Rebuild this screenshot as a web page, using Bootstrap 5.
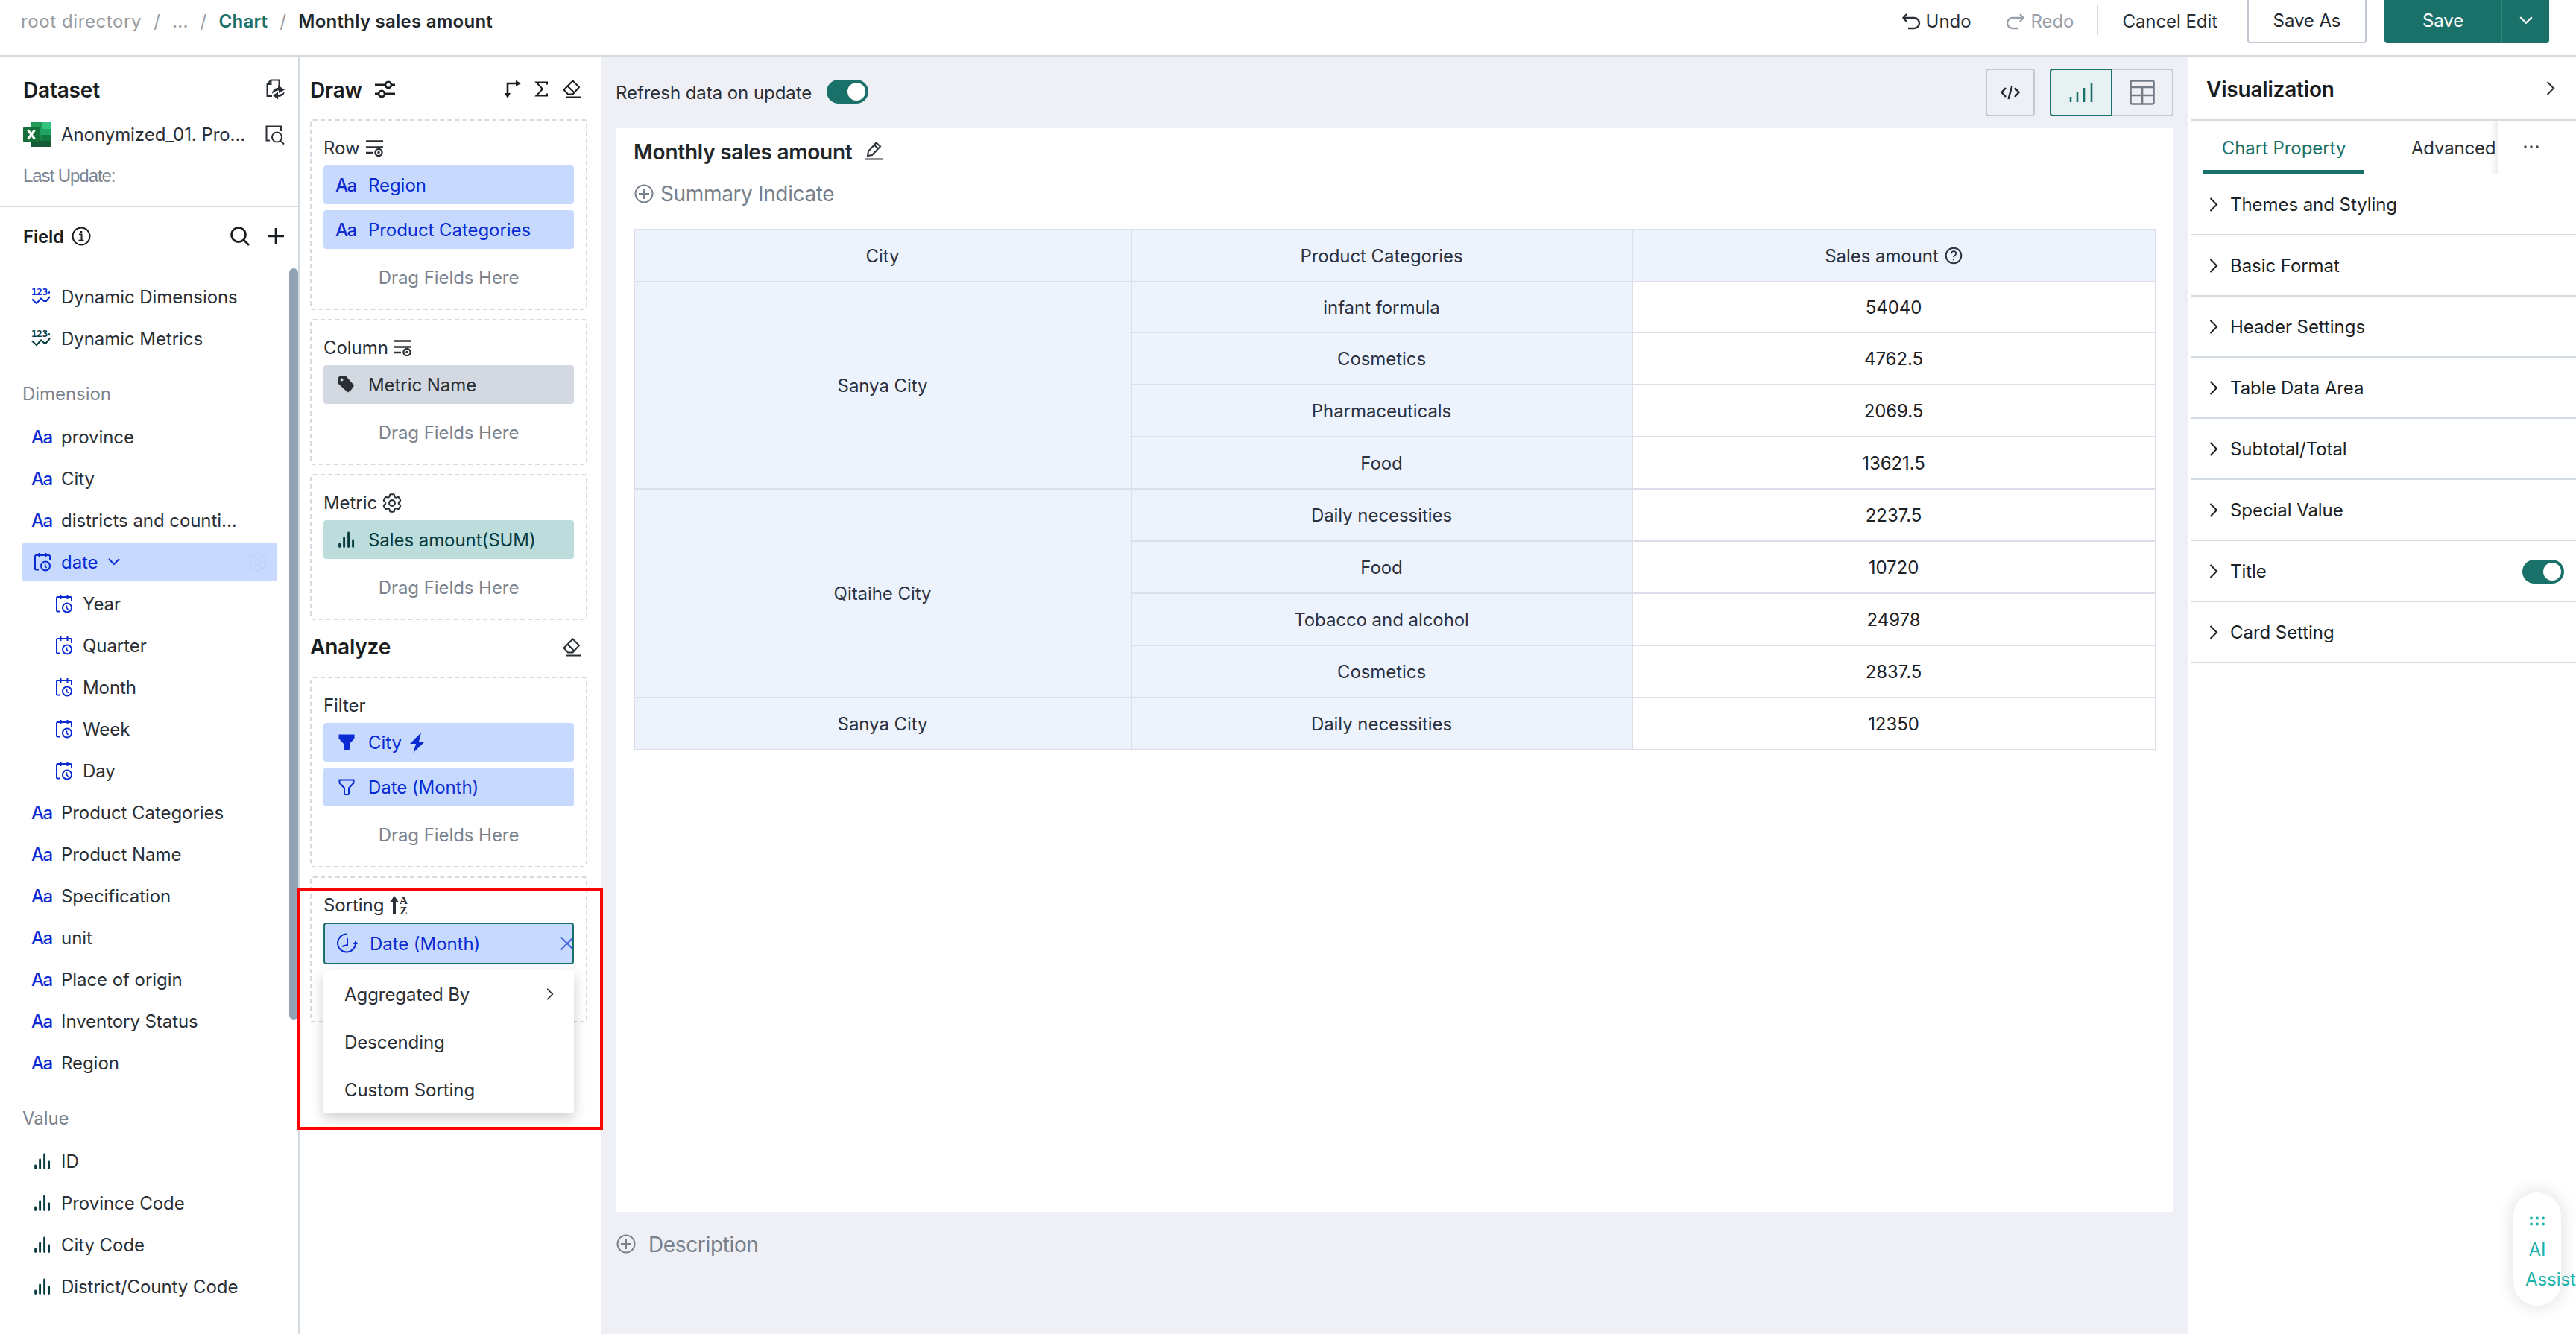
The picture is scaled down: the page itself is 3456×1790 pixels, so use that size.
<!DOCTYPE html>
<html lang="en">
<head>
<meta charset="utf-8">
<title>Monthly sales amount</title>
<link href="https://cdn.jsdelivr.net/npm/bootstrap@5.3.0/dist/css/bootstrap.min.css" rel="stylesheet">
<style>
:root{--green:#1a7169;--line:#d4dae1;--blue:#0a2bd3;--ink:#2a2f35;--muted:#7b838f;--canvas:#eff0f6}
body{width:3456px;height:1790px;overflow:hidden;background:#fff;font-family:Inter,"Liberation Sans",sans-serif;font-size:24px;line-height:36px;letter-spacing:-.06px;color:var(--ink)}
svg{flex:none;display:block;fill:none;stroke:currentColor;stroke-width:2;overflow:visible}
.topbar{height:76px;border-bottom:2px solid var(--line);padding:0 36px 0 28px}
.crumbs{height:58px;gap:16px;color:#999c9f;letter-spacing:.25px}
.tools{height:58px}
.btn-head{height:64px;border-radius:4px;font-size:24px;margin-top:-6px;letter-spacing:-.1px;padding-top:9px}
.btn-saveas{width:160px;border:2px solid #c0c7d2;color:#22272b;margin-left:40px}
.btn-save{background:var(--green);color:#fff;border:0;padding-left:0;padding-right:0}
.heading{font-size:28px;font-weight:600;letter-spacing:-.2px;color:#191d20;line-height:40px}
.work{height:1714px}
.fields{width:402px;border-right:2px solid var(--line)}
.dataset{height:202px;border-bottom:2px solid var(--line);padding:0 18px 0 31px}
.updated{font-family:"Liberation Sans",sans-serif;letter-spacing:-1.05px;color:var(--muted);margin-top:19px}
.field-list{padding:34px 28px 0 30px}
.fld{height:52px;margin-bottom:4px;padding:2px 0 0 12px;border-radius:4px;white-space:nowrap}
.fld svg,.pill svg,.prop svg{margin-bottom:2px}
.fld .ico{width:40px;color:var(--blue)}
.fld.sub{padding-left:41px}
.ico-val,.fld .ico.ico-val{color:#073b3f}
.fld .aa,.pill .aa{font-weight:500;letter-spacing:-1.6px;color:var(--blue)}
.group-label{height:76px;padding-top:25px;color:var(--muted);line-height:40px}
.fld.active{background:#c7dafe;color:var(--blue)}
.scroll-thumb{position:absolute;left:388px;top:284px;width:12px;height:1008px;border-radius:6px;background:#92a3b6}
.shelves{width:404px;padding:0 18px 0 14px}
.shelf{border:2px dashed var(--line);border-radius:4px;padding:0 16px;height:196px;margin-bottom:12px}
.shelf.tall{height:256px}
.shelf-label{height:60px;padding-top:14px}
.pill{height:52px;border-radius:4px;background:#c7dafe;color:var(--blue);margin-bottom:8px;padding:2px 0 0 16px}
.pill .ico{width:44px}
.pill-grey{background:#d4d8e0;color:var(--ink)}
.pill-teal{background:#bddddd;color:#073b3f}
.pill-open{height:56px;border:2px solid var(--green);overflow:hidden}
.drop-hint{color:var(--muted);text-align:center;margin-top:21px}
.sort-menu{display:block;position:absolute;left:16px;top:124px;width:336px;height:192px;padding:0;border:0;border-radius:2px;font-size:24px;box-shadow:0 6px 18px rgba(0,0,0,.2);z-index:2}
.sort-menu .dropdown-item{height:64px;padding:2px 27px 0 28px;color:var(--ink)}
.marker{position:absolute;left:399px;top:1192px;width:410px;height:324px;border:4px solid #fe0000;z-index:3}
.main{background:var(--canvas);width:2130px;padding:0 20px}
.mainbar{height:96px}
.form-switch .form-check-input{width:56px;height:32px;margin:0;border:0;background-color:var(--green)}
.form-switch{padding:0;min-height:0;line-height:0}
.tool-btn{height:64px;border:2px solid #c2c9d0;border-radius:4px;background:transparent;color:#22272b}
.tool-btn.on{border-color:var(--green);background:#e8f1f2;color:var(--green);border-radius:4px 0 0 4px}
.sheet{background:#fff;height:1454px;padding:14px 24px 0}
.sheet-title{font-weight:600;font-size:28px;letter-spacing:-.25px;line-height:36px;color:#22272b}
.hint{font-size:28px;letter-spacing:-.36px;color:#77808b}
.pivot{width:2043px;table-layout:fixed;border-collapse:collapse;text-align:center;color:#1d2125;margin-top:30px}
.pivot th,.pivot td{border:2px solid #dcdfe9;height:70px;padding:2px 1px 0 0;font-weight:400;vertical-align:middle}
.pivot th{background:#ecf3fd;color:#2b3140}
.pivot .first>*{height:68px}
.props{width:520px;padding-left:4px}
.props-head{height:86px;border-bottom:2px solid var(--line);padding:3px 28px 0 20px}
.props-tabs{height:72px}
.tab-on{width:216px;margin-left:16px;height:72px;color:var(--green);border-bottom:6px solid var(--green);padding-top:19px;text-align:center}
.tab-cut{width:180px;padding:19px 0 0 63px;overflow:hidden;letter-spacing:-.2px;background:linear-gradient(90deg,transparent 168px,rgba(0,0,0,.07) 180px)}
.prop{height:82px;border-bottom:2px solid var(--line);padding:2px 16px 0 24px;color:#1b1f23}
.prop svg{margin-right:16px}
.assistant{position:absolute;left:3372px;top:1600px;width:64px;height:152px;border-radius:32px;background:#fff;box-shadow:0 0 24px rgba(0,0,0,.14);color:#1bb3ab;line-height:40px;padding-top:32px}
.assistant svg{margin:0 auto 12px}
.assistant span{display:block;text-align:center}
.assistant .over{padding-left:16px;text-align:left;white-space:nowrap}
</style>
</head>
<body class="position-relative">
<svg class="d-none">
  <symbol id="date" viewBox="0 0 22 26"><path d="M6 23.500H2.500Q1 23.500 1 22V5.500Q1 4 2.500 4H19.500Q21 4 21 5.500V10M6.500 1v6M15.500 1v6"/><circle cx="15" cy="18.500" r="6"/><path d="M14.600 15.500V19l2 1.800" stroke-width="1.600"/></symbol>
  <symbol id="bars" viewBox="0 0 22 22"><path d="M1.600 17v3.500M7.600 9v11.500M13.600 2v18.500M19.600 12v8.500" stroke-width="2.900" stroke-linecap="round"/></symbol>
  <symbol id="num" viewBox="0 0 26 24"><text x="0" y="10" font-family="DejaVu Sans Mono" font-weight="700" font-size="12.500" letter-spacing="-.2" fill="currentColor" stroke="none">123</text><path d="M23 6.500h2" stroke-width="2.400"/><path d="M1 15.500l6 5.500 6-6.500 4 3.500h3l5-6"/></symbol>
  <symbol id="rows" viewBox="0 0 24 22"><path d="M0 1.500h23M0 9.500h23M0 17h9" stroke-width="2.400"/><circle cx="17" cy="16.500" r="4.600" stroke-width="2.300"/><circle cx="17" cy="16.500" r=".8"/></symbol>
  <symbol id="gear" viewBox="2 2 20 20"><path stroke-width="1.600" d="M9.594 3.940c.09-.542.56-.94 1.110-.94h2.593c.55 0 1.020.398 1.110.94l.213 1.281c.063.374.313.686.645.87.074.04.147.083.22.127.325.196.72.257 1.075.124l1.217-.456a1.125 1.125 0 0 1 1.370.49l1.296 2.247a1.125 1.125 0 0 1-.26 1.431l-1.003.827c-.293.241-.438.613-.43.992a7.723 7.723 0 0 1 0 .255c-.008.378.137.75.43.991l1.004.827c.424.35.534.955.26 1.430l-1.298 2.247a1.125 1.125 0 0 1-1.369.491l-1.217-.456c-.355-.133-.75-.072-1.076.124a6.470 6.470 0 0 1-.22.128c-.331.183-.581.495-.644.869l-.213 1.281c-.09.543-.56.94-1.110.94h-2.594c-.55 0-1.019-.398-1.110-.94l-.213-1.281c-.062-.374-.312-.686-.644-.87a6.520 6.520 0 0 1-.22-.127c-.325-.196-.72-.257-1.076-.124l-1.217.456a1.125 1.125 0 0 1-1.369-.49l-1.297-2.247a1.125 1.125 0 0 1 .26-1.431l1.004-.827c.292-.24.437-.613.43-.991a6.932 6.932 0 0 1 0-.255c.007-.38-.138-.751-.43-.992l-1.004-.827a1.125 1.125 0 0 1-.26-1.430l1.297-2.247a1.125 1.125 0 0 1 1.370-.491l1.216.456c.356.133.751.072 1.076-.124.072-.044.146-.086.22-.128.332-.183.582-.495.644-.869l.214-1.280Z"/><circle cx="12" cy="12" r="3" stroke-width="1.600"/></symbol>
  <symbol id="eraser" viewBox="0 0 25 25"><path d="M13.500 1.500l8.500 8.500-8.500 9.500H7L1.500 13.500zM6.500 8.500l9 9M5 23.500h20"/></symbol>
  <symbol id="right" viewBox="0 0 12 19"><path d="M1.500 1l8.500 8.500-8.500 8.500"/></symbol>
  <symbol id="down" viewBox="0 0 16 10"><path d="M1 1l7 7 7-7"/></symbol>
  <symbol id="plusc" viewBox="0 0 26 26"><circle cx="13" cy="13" r="11.500"/><path d="M6 13h14M13 6v14"/></symbol>
</svg>

<header class="topbar d-flex justify-content-between align-items-start">
  <nav class="crumbs d-flex align-items-center">
    <span style="letter-spacing:.6px">root directory</span><span>/</span><span>...</span><span>/</span>
    <span class="fw-semibold" style="color:var(--green)">Chart</span><span>/</span>
    <span class="fw-semibold" style="color:#22272b">Monthly sales amount</span>
  </nav>
  <div class="tools d-flex align-items-center">
    <svg width="24" height="22" viewBox="0 0 24 22"><path d="M6 1L1.500 6 6 11M2 6h14a6.500 6.500 0 0 1 0 14H8" stroke-width="2.400"/></svg>
    <span class="ms-2" style="margin-right:48px">Undo</span>
    <span class="d-flex align-items-center" style="color:#989fa8"><svg width="24" height="22" viewBox="0 0 24 22"><path d="M18 1l4.500 5-4.500 5M22 6H8a6.500 6.500 0 0 0 0 14h8" stroke-width="2.400"/></svg>
    <span class="ms-2">Redo</span></span>
    <span style="width:2px;height:40px;background:var(--line);margin:0 32px 4px 31px"></span>
    <span>Cancel Edit</span>
    <button class="btn btn-head btn-saveas">Save As</button>
    <div class="btn-group ms-4">
      <button class="btn btn-head btn-save" style="width:157px">Save</button>
      <button class="btn btn-head btn-save d-flex align-items-center justify-content-center" style="width:65px;border-left:2px solid #30887f"><svg width="18" height="11"><use href="#down"/></svg></button>
    </div>
  </div>
</header>

<div class="work d-flex position-relative">
  <aside class="fields flex-shrink-0">
    <section class="dataset">
      <div class="d-flex justify-content-between align-items-center" style="padding-top:25px">
        <span class="heading">Dataset</span>
        <svg width="25" height="28" viewBox="0 0 25 28" style="margin-top:-3px"><path d="M17.500 9V1.500H6.500L1.500 7v16H8M6.500 1.500V7h-5"/><path d="M8 20q1-8 8-8V8.500l9 6-8 4.500v-3.500q-5 0-9 4.500zM25 17q-1 7-9 7v3.500l-7-5.500 7-4.500V21q5 0 9-4z" fill="currentColor" stroke="none"/></svg>
      </div>
      <div class="d-flex align-items-center" style="padding-top:22px">
        <svg width="37" height="33" viewBox="0 0 37 33" style="stroke:none;margin-bottom:2px"><path fill="#21a366" d="M10 0h27v33H10z"/><path fill="#229a58" d="M10 0h15v9H10z"/><path fill="#33c481" d="M25 0h12v9H25z"/><path fill="#1e8549" d="M10 17h15v16H10z"/><path fill="#107c41" d="M25 17h12v8H25z"/><path fill="#185c37" d="M10 25h27v8H10z"/><path fill="#0b5a2c" d="M10 8h13v20H10z"/><rect y="6" width="22" height="21" rx="2" fill="#15703a"/><path d="M6.500 10.500l9 12M15.500 10.500l-9 12" style="stroke:#fff;stroke-width:3"/></svg>
        <span class="flex-grow-1" style="margin-left:14px">Anonymized_01. Pro...</span>
        <svg width="26" height="26" viewBox="0 0 26 26"><path d="M21 8V1.500H1.500v19H6"/><circle cx="15.500" cy="16" r="6.500"/><path d="M20 20.500l5 5"/></svg>
      </div>
      <div class="updated">Last Update:</div>
    </section>
    <div class="d-flex align-items-center" style="height:40px;margin:20px 18px 0 31px;color:#191d20">
      <span class="fw-semibold" style="letter-spacing:-.2px">Field</span>
      <svg width="26" height="26" viewBox="0 0 26 26" style="margin:-3px 0 0 10px"><circle cx="13" cy="13" r="11.500"/><path d="M10 10.500h3.500v8M9.500 18.800h7"/><path d="M11.800 7h2.400"/></svg>
      <svg class="ms-auto" width="26" height="26" viewBox="0 0 26 26" style="margin-top:-3px"><circle cx="11" cy="11" r="9.500" stroke-width="2.600"/><path d="M18 18l7 7" stroke-width="2.600"/></svg>
      <svg width="24" height="24" viewBox="0 0 24 24" style="margin:-3px 0 0 23px"><path d="M1 12h22M12 1v22" stroke-width="2.600"/></svg>
    </div>
    <div class="field-list">
      <div class="fld d-flex align-items-center"><span class="ico"><svg width="26" height="24"><use href="#num"/></svg></span>Dynamic Dimensions</div>
      <div class="fld d-flex align-items-center"><span class="ico ico-val"><svg width="26" height="24"><use href="#num"/></svg></span>Dynamic Metrics</div>
      <div class="group-label">Dimension</div>
      <div class="fld d-flex align-items-center"><span class="ico aa">Aa</span>province</div>
      <div class="fld d-flex align-items-center"><span class="ico aa">Aa</span>City</div>
      <div class="fld d-flex align-items-center"><span class="ico aa">Aa</span>districts and counti...</div>
      <div class="fld active d-flex align-items-center"><span class="ico ps-1"><svg width="22" height="26"><use href="#date"/></svg></span>date<svg width="16" height="10" style="margin-left:13px"><use href="#down"/></svg><svg class="ms-auto" width="26" height="26" style="margin-right:13px;color:#bfd3fb"><use href="#gear"/></svg></div>
      <div class="fld sub d-flex align-items-center"><span class="ico ps-1"><svg width="22" height="26"><use href="#date"/></svg></span>Year</div>
      <div class="fld sub d-flex align-items-center"><span class="ico ps-1"><svg width="22" height="26"><use href="#date"/></svg></span>Quarter</div>
      <div class="fld sub d-flex align-items-center"><span class="ico ps-1"><svg width="22" height="26"><use href="#date"/></svg></span>Month</div>
      <div class="fld sub d-flex align-items-center"><span class="ico ps-1"><svg width="22" height="26"><use href="#date"/></svg></span>Week</div>
      <div class="fld sub d-flex align-items-center"><span class="ico ps-1"><svg width="22" height="26"><use href="#date"/></svg></span>Day</div>
      <div class="fld d-flex align-items-center"><span class="ico aa">Aa</span>Product Categories</div>
      <div class="fld d-flex align-items-center"><span class="ico aa">Aa</span>Product Name</div>
      <div class="fld d-flex align-items-center"><span class="ico aa">Aa</span>Specification</div>
      <div class="fld d-flex align-items-center"><span class="ico aa">Aa</span>unit</div>
      <div class="fld d-flex align-items-center"><span class="ico aa">Aa</span>Place of origin</div>
      <div class="fld d-flex align-items-center"><span class="ico aa">Aa</span>Inventory Status</div>
      <div class="fld d-flex align-items-center"><span class="ico aa">Aa</span>Region</div>
      <div class="group-label">Value</div>
      <div class="fld d-flex align-items-center"><span class="ico ico-val ps-1"><svg width="22" height="22"><use href="#bars"/></svg></span>ID</div>
      <div class="fld d-flex align-items-center"><span class="ico ico-val ps-1"><svg width="22" height="22"><use href="#bars"/></svg></span>Province Code</div>
      <div class="fld d-flex align-items-center"><span class="ico ico-val ps-1"><svg width="22" height="22"><use href="#bars"/></svg></span>City Code</div>
      <div class="fld d-flex align-items-center"><span class="ico ico-val ps-1"><svg width="22" height="22"><use href="#bars"/></svg></span>District/County Code</div>
    </div>
    <div class="scroll-thumb"></div>
  </aside>

  <aside class="shelves flex-shrink-0">
    <div class="d-flex align-items-center" style="height:84px;padding:5px 8px 0 0;color:#191d20">
      <span class="heading">Draw</span>
      <svg width="27" height="24" viewBox="0 0 27 24" style="margin:-2px 0 0 17px"><path d="M0 6h14M22 6h5M0 18h5M13 18h14" stroke-width="2.800"/><circle cx="18" cy="6" r="4" stroke-width="2.800"/><circle cx="9" cy="18" r="4" stroke-width="2.800"/></svg>
      <svg class="ms-auto" width="22" height="25" viewBox="0 0 22 25" style="margin-top:-3px"><path d="M4 19V5h12" stroke-width="2.600"/><path d="M0 18h8l-4 7zM15 1v8l7-4z" fill="currentColor" stroke="none"/></svg>
      <svg width="18" height="21" viewBox="0 0 18 21" style="margin:-3px 0 0 19px"><path d="M16 4.500V1.500H1.500L10 10.500 1.500 19.500H16v-3"/></svg>
      <svg width="25" height="25" style="margin:-3px 0 0 19px"><use href="#eraser"/></svg>
    </div>
    <div class="shelf tall">
      <div class="shelf-label d-flex align-items-center">Row<svg class="ms-2" width="24" height="22"><use href="#rows"/></svg></div>
      <div class="pill d-flex align-items-center"><span class="ico aa">Aa</span>Region</div>
      <div class="pill d-flex align-items-center"><span class="ico aa">Aa</span>Product Categories</div>
      <div class="drop-hint">Drag Fields Here</div>
    </div>
    <div class="shelf">
      <div class="shelf-label d-flex align-items-center">Column<svg class="ms-2" width="24" height="22"><use href="#rows"/></svg></div>
      <div class="pill pill-grey d-flex align-items-center"><span class="ico ps-1"><svg width="21" height="22" viewBox="0 0 21 22" style="stroke:none"><path fill="currentColor" fill-rule="evenodd" d="M2 0h8.500L21 12q-3 7-8.500 9.500L0 10V2q0-2 2-2zM4.500 2.500a2 2 0 1 0 .1 4 2 2 0 0 0-.1-4z"/></svg></span>Metric Name</div>
      <div class="drop-hint">Drag Fields Here</div>
    </div>
    <div class="shelf">
      <div class="shelf-label d-flex align-items-center">Metric<svg width="26" height="26" style="margin-left:7px"><use href="#gear"/></svg></div>
      <div class="pill pill-teal d-flex align-items-center"><span class="ico ps-1"><svg width="22" height="22"><use href="#bars"/></svg></span>Sales amount(SUM)</div>
      <div class="drop-hint">Drag Fields Here</div>
    </div>
    <div class="d-flex align-items-center justify-content-between" style="height:64px;padding:0 8px 16px 0"><span class="heading">Analyze</span><svg width="25" height="25"><use href="#eraser"/></svg></div>
    <div class="shelf tall">
      <div class="shelf-label d-flex align-items-center">Filter</div>
      <div class="pill d-flex align-items-center"><span class="ico ps-1"><svg width="22" height="22" viewBox="0 0 22 22"><path fill="currentColor" d="M1.500 1.500h19v4l-6.500 7V20q0 1-1 1H9q-1 0-1-1v-7.500l-6.500-7z"/></svg></span>City<svg width="20" height="27" viewBox="0 0 20 27" style="margin-left:11px;stroke:none"><path fill="currentColor" d="M15 0L0 15h8L4.500 27 20 12h-8z"/></svg></div>
      <div class="pill d-flex align-items-center"><span class="ico ps-1"><svg width="22" height="22" viewBox="0 0 22 22"><path d="M1.500 1.500h19v4l-6.500 7V20q0 1-1 1H9q-1 0-1-1v-7.500l-6.500-7z"/></svg></span>Date (Month)</div>
      <div class="drop-hint">Drag Fields Here</div>
    </div>
    <div class="shelf position-relative">
      <div class="shelf-label d-flex align-items-center">Sorting<svg width="26" height="28" viewBox="0 0 26 28" style="margin-left:8px"><path d="M6 26V6" stroke-width="4"/><path d="M.5 9h11L6 1z" fill="currentColor" stroke="none"/><text x="13" y="12" font-family="Liberation Serif" font-weight="700" font-size="15" fill="currentColor" stroke="none">A</text><text x="13.500" y="26" font-family="Liberation Serif" font-weight="700" font-size="15" fill="currentColor" stroke="none">Z</text></svg></div>
      <div class="pill pill-open d-flex align-items-center"><span class="ico"><svg width="28" height="28" viewBox="0 0 28 28"><path d="M13 1.500A12 12 0 1 0 25 14"/><path d="M14 7v9l-7 2"/><path d="M22 15l3-5 3 5z" fill="currentColor" stroke="none"/></svg></span>Date (Month)<svg class="ms-auto" width="20" height="20" viewBox="0 0 20 20" style="margin-right:-3px;color:#4664e0"><path d="M1 1l18 18M19 1L1 19"/></svg></div>
      <div class="dropdown-menu show sort-menu">
        <a class="dropdown-item d-flex align-items-center justify-content-between">Aggregated By<svg width="10" height="16" style="margin-bottom:2px"><use href="#right"/></svg></a>
        <a class="dropdown-item d-flex align-items-center">Descending</a>
        <a class="dropdown-item d-flex align-items-center">Custom Sorting</a>
      </div>
    </div>
  </aside>

  <main class="main flex-shrink-0">
    <div class="mainbar d-flex align-items-center">
      <span style="padding-top:2px">Refresh data on update</span>
      <div class="form-check form-switch" style="margin-left:20px"><input class="form-check-input" type="checkbox" checked></div>
      <button class="tool-btn ms-auto d-flex align-items-center justify-content-center" style="width:66px"><svg width="26" height="20" viewBox="0 0 26 20"><path d="M7 4L1.500 10 7 16M19 4l5.500 6-5.500 6M15.500 1l-5 18" stroke-width="2.500"/></svg></button>
      <button class="tool-btn on d-flex align-items-center justify-content-center" style="width:84px;margin-left:20px"><svg width="32" height="26" viewBox="0 0 32 26"><path d="M2 19v7M11 13v13M20 7v19M30 0v26" stroke-width="2.600"/></svg></button>
      <button class="tool-btn d-flex align-items-center justify-content-center" style="width:82px;border-left:0;border-radius:0 4px 4px 0;color:#737b87"><svg width="34" height="34" viewBox="0 0 34 34"><rect x="1.500" y="1.500" width="31" height="31" rx="2" stroke-width="2.600"/><path d="M1 10h32M1 21h32M17 10v23" stroke-width="2.600"/></svg></button>
    </div>
    <div class="sheet">
      <div class="d-flex align-items-center"><span class="sheet-title">Monthly sales amount</span><svg width="26" height="25" viewBox="0 0 26 25" style="margin-left:17px;margin-top:-4px"><path d="M1 23.500h24M4 19l1-6L15.500 1.500l5.500 5L10 18zM13 4.500l5 5"/></svg></div>
      <div class="hint d-flex align-items-center" style="margin-top:19px"><svg width="26" height="26" style="margin-left:1px"><use href="#plusc"/></svg><span style="margin-left:9px;padding-top:1px">Summary Indicate</span></div>
      <table class="pivot" style="margin-top:29px">
        <colgroup><col style="width:667px"><col style="width:672px"><col style="width:702px"></colgroup>
        <tr><th>City</th><th>Product Categories</th><th><span class="d-flex align-items-center justify-content-center">Sales amount<svg width="24" height="24" viewBox="0 0 24 24" style="margin:0 0 2px 8px"><circle cx="12" cy="12" r="10.300"/><path d="M8.800 9.500q0-3.300 3.200-3.300t3.200 3q0 1.500-1.700 2.700Q12 13 12 14.300M12 16v2.300" stroke-width="1.800"/></svg></span></th></tr>
        <tr class="first"><th rowspan="4">Sanya City</th><th>infant formula</th><td>54040</td></tr>
        <tr><th>Cosmetics</th><td>4762.5</td></tr>
        <tr><th>Pharmaceuticals</th><td>2069.5</td></tr>
        <tr><th>Food</th><td>13621.5</td></tr>
        <tr><th rowspan="4">Qitaihe City</th><th>Daily necessities</th><td>2237.5</td></tr>
        <tr><th>Food</th><td>10720</td></tr>
        <tr><th>Tobacco and alcohol</th><td>24978</td></tr>
        <tr><th>Cosmetics</th><td>2837.5</td></tr>
        <tr><th>Sanya City</th><th>Daily necessities</th><td>12350</td></tr>
      </table>
    </div>
    <div class="hint d-flex align-items-center" style="margin-top:24px"><svg width="26" height="26" style="margin-left:1px"><use href="#plusc"/></svg><span style="margin-left:17px;padding-top:2px">Description</span></div>
  </main>

  <aside class="props flex-shrink-0">
    <div class="props-head d-flex align-items-center justify-content-between"><span class="heading">Visualization</span><svg width="12" height="19" style="margin-bottom:2px"><use href="#right"/></svg></div>
    <div class="props-tabs d-flex">
      <div class="tab-on">Chart Property</div>
      <div class="tab-cut">Advanced</div>
      <svg width="20" height="4" viewBox="0 0 20 4" style="margin:33px 0 0 34px;stroke:none;fill:#3a3f45"><circle cx="2" cy="2" r="1.700"/><circle cx="10" cy="2" r="1.700"/><circle cx="18" cy="2" r="1.700"/></svg>
    </div>
    <div class="prop d-flex align-items-center"><svg width="12" height="19"><use href="#right"/></svg>Themes and Styling</div>
    <div class="prop d-flex align-items-center"><svg width="12" height="19"><use href="#right"/></svg>Basic Format</div>
    <div class="prop d-flex align-items-center"><svg width="12" height="19"><use href="#right"/></svg>Header Settings</div>
    <div class="prop d-flex align-items-center"><svg width="12" height="19"><use href="#right"/></svg>Table Data Area</div>
    <div class="prop d-flex align-items-center"><svg width="12" height="19"><use href="#right"/></svg>Subtotal/Total</div>
    <div class="prop d-flex align-items-center"><svg width="12" height="19"><use href="#right"/></svg>Special Value</div>
    <div class="prop d-flex align-items-center"><svg width="12" height="19"><use href="#right"/></svg>Title<div class="form-check form-switch ms-auto mb-0"><input class="form-check-input" type="checkbox" checked></div></div>
    <div class="prop d-flex align-items-center"><svg width="12" height="19"><use href="#right"/></svg>Card Setting</div>
  </aside>
</div>
<div class="marker"></div>
<div class="assistant">
  <svg width="20" height="13" viewBox="0 0 20 13" style="stroke:none;fill:currentColor"><circle cx="2" cy="2.500" r="2"/><circle cx="10" cy="2.500" r="2"/><circle cx="18" cy="2.500" r="2"/><circle cx="2" cy="10.500" r="2"/><circle cx="10" cy="10.500" r="2"/><circle cx="18" cy="10.500" r="2"/></svg>
  <span>AI</span><span class="over">Assist</span>
</div>
<script src="https://cdn.jsdelivr.net/npm/bootstrap@5.3.0/dist/js/bootstrap.bundle.min.js"></script>
</body>
</html>
